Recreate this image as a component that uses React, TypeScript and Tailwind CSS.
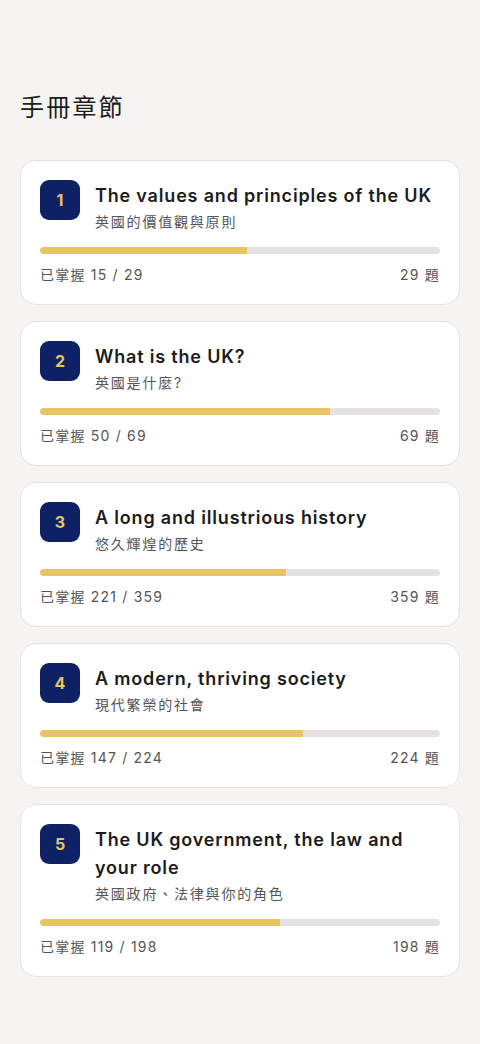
import React from "react";

const chapters = [
  { n: 1, en: "The values and principles of the UK", zh: "英國的價值觀與原則", done: 15, total: 29 },
  { n: 2, en: "What is the UK?", zh: "英國是什麼?", done: 50, total: 69 },
  { n: 3, en: "A long and illustrious history", zh: "悠久輝煌的歷史", done: 221, total: 359 },
  { n: 4, en: "A modern, thriving society", zh: "現代繁榮的社會", done: 147, total: 224 },
  { n: 5, en: "The UK government, the law and your role", zh: "英國政府、法律與你的角色", done: 119, total: 198 },
];

export default function App() {
  return (
    <div
      className="min-h-[1044px] w-[480px] bg-[#f5f4f2] px-5 pt-[88px] pb-10"
      style={{ fontFamily: 'Inter, "Noto Sans CJK TC", sans-serif' }}
    >
      <h1 className="text-[24px] leading-[40px] font-normal tracking-[2.2px] text-[#1c1c1c] mb-[32px]">手冊章節</h1>
      <div className="flex flex-col gap-4">
        {chapters.map((c) => (
          <div
            key={c.n}
            className="rounded-2xl border border-[#e4e2de] bg-white px-[19px] pt-[19px] pb-[19px]"
          >
            <div className="flex gap-[15px]">
              <div className="flex h-10 w-10 shrink-0 items-center justify-center rounded-[9px] bg-[#0e2165] text-[16px] font-bold text-[#e6c36a]">
                {c.n}
              </div>
              <div className="flex flex-col gap-[2px] pt-[2px]">
                <div className="text-[18px] leading-[28px] font-semibold text-[#1c1c1c] tracking-[0.82px]">{c.en}</div>
                <div className="text-[14px] leading-[20px] text-[#555555] tracking-[1.8px]">{c.zh}</div>
              </div>
            </div>
            <div className="mt-[15px] h-[7px] w-full overflow-hidden rounded-full bg-[#e4e3df]">
              <div
                className="h-full rounded-l-full bg-[#e8c465]"
                style={{ width: `${(c.done / c.total) * 100}%` }}
              />
            </div>
            <div className="mt-[11px] flex justify-between text-[14px] leading-[20px] text-[#555555] tracking-[1.2px]">
              <span>已掌握 {c.done} / {c.total}</span>
              <span>{c.total} 題</span>
            </div>
          </div>
        ))}
      </div>
    </div>
  );
}
